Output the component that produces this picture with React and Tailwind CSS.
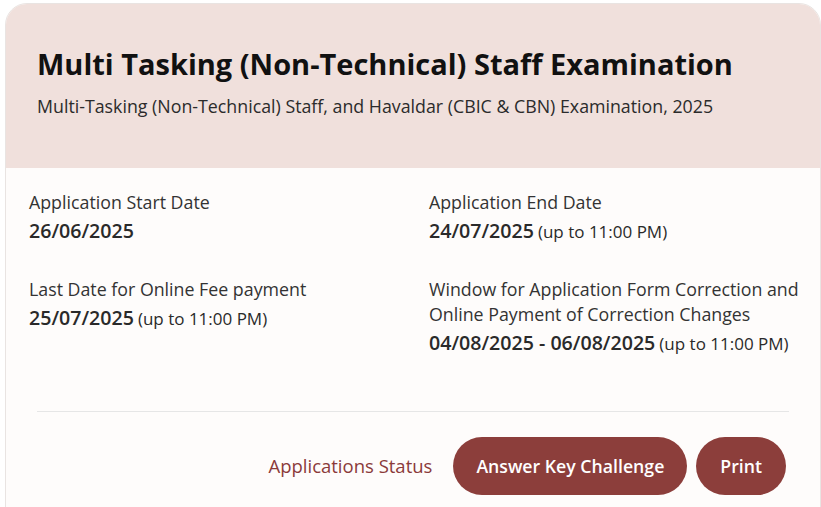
import React from "react";

const dates = [
  { label: "Application Start Date", date: "26/06/2025" },
  { label: "Application End Date", date: "24/07/2025", note: "(up to 11:00 PM)" },
  { label: "Last Date for Online Fee payment", date: "25/07/2025", note: "(up to 11:00 PM)" },
  {
    label: "Window for Application Form Correction and Online Payment of Correction Changes",
    date: "04/08/2025 - 06/08/2025",
    note: "(up to 11:00 PM)",
  },
];

export default function App() {
  return (
    <div className="min-h-screen bg-white pt-[3px] pl-[5px]" style={{ fontFamily: "'Open Sans', 'Noto Sans', sans-serif" }}>
      <div className="w-[816px] rounded-t-[22px] border border-[#e9e4e2] bg-[#fefcfb] overflow-hidden">
        <div className="bg-[#f0e0dc] pl-[31px] pr-6 pt-[42px] pb-[50px]">
          <h1 className="text-[29px] leading-[36px] font-bold text-[#111111]">
            Multi Tasking (Non-Technical) Staff Examination
          </h1>
          <p className="mt-3 text-[17.8px] leading-[24px] text-[#2b2b2b]">
            Multi-Tasking (Non-Technical) Staff, and Havaldar (CBIC &amp; CBN) Examination, 2025
          </p>
        </div>

        <div className="pl-[23px] pr-3 pt-[22px] grid grid-cols-[400px_1fr] gap-y-[31px]">
          {dates.map((d) => (
            <div key={d.label}>
              <div className="text-[17.8px] leading-[25px] text-[#333333]">{d.label}</div>
              <div className="mt-[2px] leading-[28px] text-[#2a2a2a]">
                <span className="text-[19.6px] font-semibold">{d.date}</span>
                {d.note && <span className="text-[17px] ml-1">{d.note}</span>}
              </div>
            </div>
          ))}
        </div>

        <div className="mx-[31px] mt-[53px] border-t border-[#e6e6e6]" />

        <div className="flex justify-end items-center pt-[25px] pr-[34px] pb-6">
          <span className="text-[18.5px] text-[#8b3a3a] mr-[21px]">Applications Status</span>
          <button className="h-[58px] px-[23px] rounded-full bg-[#8c3e3b] text-white text-[17.7px] font-semibold">
            Answer Key Challenge
          </button>
          <button className="ml-[9px] h-[58px] px-[24px] rounded-full bg-[#8c3e3b] text-white text-[17.7px] font-semibold">
            Print
          </button>
        </div>
      </div>
    </div>
  );
}
